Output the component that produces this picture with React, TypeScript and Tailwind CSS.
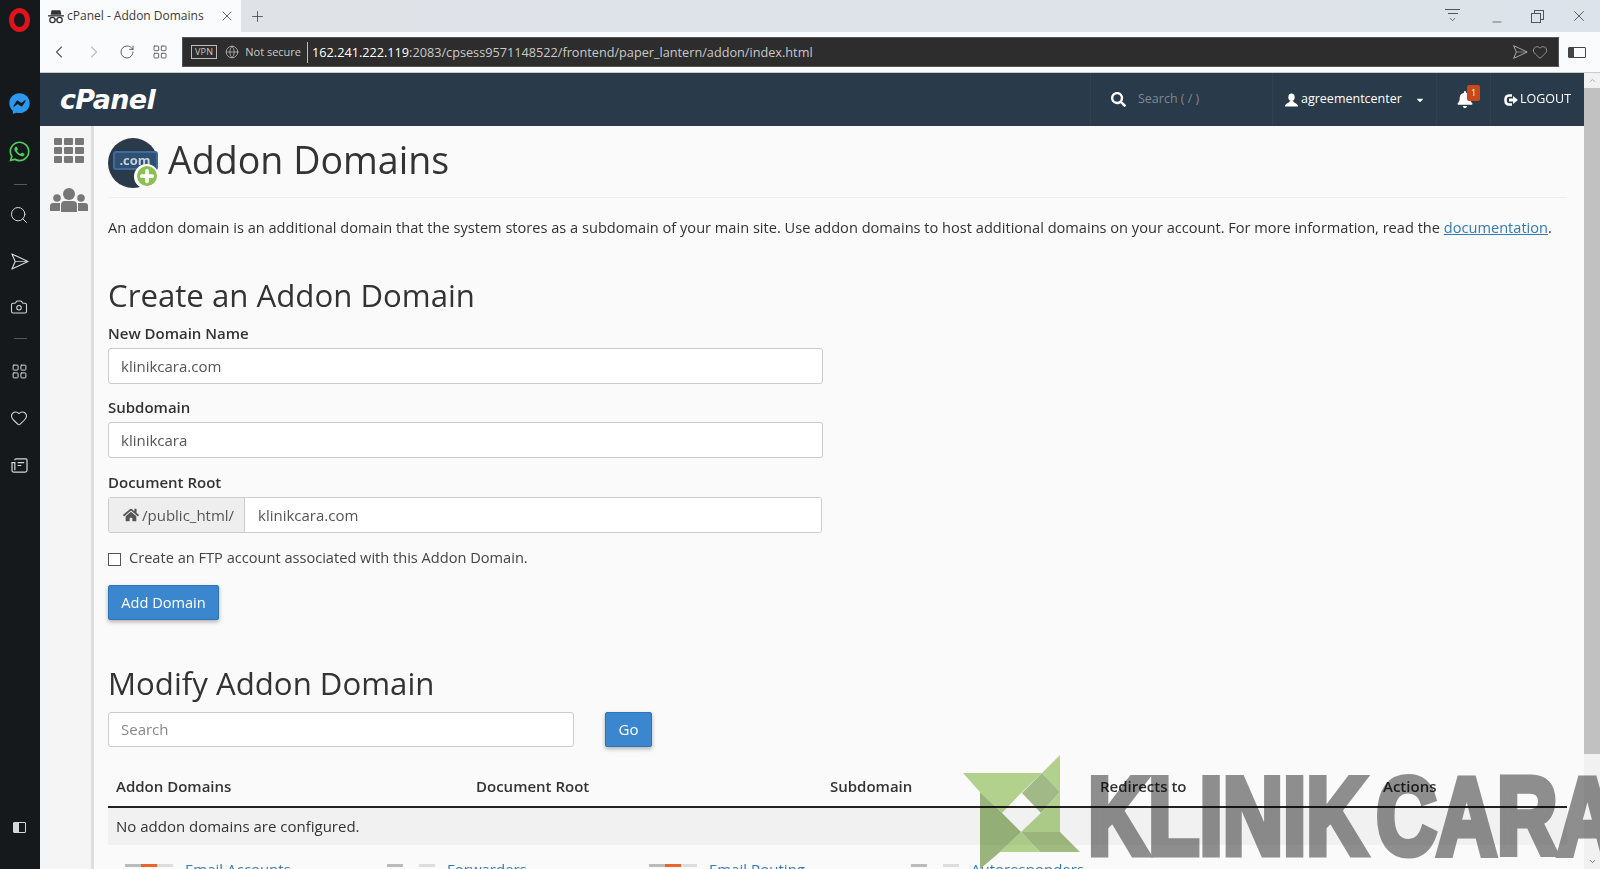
import React from 'react'
import {
  ChevronLeft,
  ChevronRight,
  RotateCw,
  LayoutGrid,
  Globe,
  Search,
  Heart,
  Camera,
  Plus,
  X,
  Minus,
  ChevronUp,
  ChevronDown,
} from 'lucide-react'
import { FaBell, FaHome, FaSearch, FaWhatsapp, FaFacebookMessenger, FaCaretDown } from 'react-icons/fa'

// Avião de papel da Opera (contorno)
const PlaneIcon = ({ className = '' }: { className?: string }) => (
  <svg viewBox="0 0 20 20" fill="none" stroke="currentColor" strokeWidth={1.2} strokeLinejoin="round" className={className}>
    <path d="M2 2 L19 10 L2 18 L5.5 10 Z" />
    <path d="M5.5 10 H19" strokeWidth={0.8} />
  </svg>
)

const NewsIcon = ({ className = '' }: { className?: string }) => (
  <svg viewBox="0 0 18 16" fill="none" stroke="currentColor" strokeWidth={1.3} className={className}>
    <path d="M4 2.5 Q4 1 5.5 1 H16 Q17 1 17 2 V13 Q17 15 15 15 H3 Q1 15 1 13 V5 H4 V13" />
    <path d="M7 5 H14 M7 8 H11" />
  </svg>
)

const IncognitoIcon = ({ className = '' }: { className?: string }) => (
  <svg viewBox="0 0 18 16" className={className}>
    <path d="M4 1 H14 L15 6 H3 Z" fill="#333" />
    <rect x="0" y="6.5" width="18" height="1.5" fill="#333" />
    <circle cx="5" cy="12" r="3" fill="none" stroke="#333" strokeWidth="1.4" />
    <circle cx="13" cy="12" r="3" fill="none" stroke="#333" strokeWidth="1.4" />
    <path d="M8 11.5 H10" stroke="#333" strokeWidth="1.2" />
  </svg>
)

const UsersIcon = ({ className = '' }: { className?: string }) => (
  <svg viewBox="0 0 38 24" fill="#777" className={className}>
    <circle cx="19" cy="6" r="6" />
    <path d="M11 24 V17 Q11 13 15 13 H23 Q27 13 27 17 V24 Z" />
    <circle cx="7" cy="10" r="3.8" />
    <path d="M0 23 V18 Q0 15 3 15 H10 V23 Z" />
    <circle cx="31" cy="10" r="3.8" />
    <path d="M28 23 V15 H35 Q38 15 38 18 V23 Z" />
  </svg>
)

const UserIcon = ({ className = '' }: { className?: string }) => (
  <svg viewBox="0 0 14 14" fill="currentColor" className={className}>
    <ellipse cx="7" cy="4" rx="3.4" ry="4" />
    <path d="M0 14 C0 10.5 4 10.5 5.5 8 H8.5 C10 10.5 14 10.5 14 14 Z" />
  </svg>
)

const LogoutIcon = ({ className = '' }: { className?: string }) => (
  <svg viewBox="0 0 14 12" className={className}>
    <path d="M8 1.5 H5 Q1.5 1.5 1.5 6 Q1.5 10.5 5 10.5 H8" fill="none" stroke="currentColor" strokeWidth="2.6" />
    <path d="M5 4.5 H9 V2 L14 6 L9 10 V7.5 H5 Z" fill="currentColor" />
  </svg>
)

// Barra lateral do navegador
const BrowserSidebar = () => (
  <aside className="w-10 shrink-0 bg-[#16191c] flex flex-col items-center text-[#d4d6d8]">
    <div className="h-[38px] mt-[1px] flex items-center justify-center -translate-x-[1px]">
      <div className="w-[21px] h-[24px] rounded-[50%] border-[5px] border-[#e0131d]" />
    </div>
    <FaFacebookMessenger className="w-[21px] h-[21px] mt-[54px] text-[#2a98ee] -translate-x-[1px]" />
    <FaWhatsapp className="w-[23px] h-[23px] mt-[26px] text-[#4fce5d] -translate-x-[1px]" />
    <div className="w-[13px] h-px bg-[#55585b] mt-[21px]" />
    <Search className="w-[20px] h-[20px] mt-[20px] -translate-x-[1px]" strokeWidth={1.2} />
    <PlaneIcon className="w-[19px] h-[19px] mt-[27px] -translate-x-[1px]" />
    <Camera className="w-[18px] h-[18px] mt-[27px] -translate-x-[1px]" strokeWidth={1.4} />
    <div className="w-[13px] h-px bg-[#55585b] mt-[22px]" />
    <LayoutGrid className="w-[17px] h-[17px] mt-[24px] -translate-x-[1px]" strokeWidth={1.4} />
    <Heart className="w-[18px] h-[18px] mt-[29px] -translate-x-[1px]" strokeWidth={1.4} />
    <NewsIcon className="w-[17px] h-[15px] mt-[31px] -translate-x-[1px]" />
    <div className="mt-auto mb-[36px] w-[13px] h-[11px] border border-[#d4d6d8] rounded-[1px] flex -translate-x-[1px]">
      <div className="w-[5px] bg-[#d4d6d8]" />
    </div>
  </aside>
)

// Abas e barra de endereço
const BrowserChrome = () => (
  <div className="shrink-0">
    <div className="h-8 flex bg-gradient-to-r from-[#dfe3e8] to-[#dde3ea]">
      <div className="w-[201px] bg-[#fafbfc] flex items-center pl-2 pr-[6px] text-[#3a3a3a]">
        <IncognitoIcon className="w-[16px] h-[15px] mr-[3px]" />
        <span className="text-[12px] flex-1 whitespace-nowrap">cPanel - Addon Domains</span>
        <X className="w-[16px] h-[16px]" strokeWidth={1.2} />
      </div>
      <Plus className="w-[17px] h-[17px] ml-[8px] mt-2 text-[#555]" strokeWidth={1.3} />
      <div className="ml-auto flex items-center text-[#444] pr-[12px]">
        <div className="flex flex-col items-center gap-[3px] mr-[30px]">
          <div className="w-[15px] h-px bg-[#555]" />
          <div className="w-[10px] h-px bg-[#555]" />
          <ChevronDown className="w-[9px] h-[9px] -mt-[2px]" />
        </div>
        <Minus className="w-[14px] h-[14px] mt-3 mr-[27px]" strokeWidth={1.2} />
        <div className="relative w-[13px] h-[13px] mr-[26px]">
          <div className="absolute left-[3px] top-0 w-[10px] h-[10px] border border-[#555]" />
          <div className="absolute left-0 top-[3px] w-[10px] h-[10px] border border-[#555] bg-[#dde3ea]" />
        </div>
        <X className="w-[18px] h-[18px]" strokeWidth={1.1} />
      </div>
    </div>
    <div className="h-[41px] bg-[#fafbfc] flex items-center border-b border-[#c8ccd0] text-[#555]">
      <ChevronLeft className="w-[20px] h-[20px] ml-[9px]" strokeWidth={1.3} />
      <ChevronRight className="w-[20px] h-[20px] ml-[15px] text-[#bbb]" strokeWidth={1.3} />
      <RotateCw className="w-[16px] h-[16px] ml-[15px]" strokeWidth={1.4} />
      <LayoutGrid className="w-[16px] h-[16px] ml-[17px]" strokeWidth={1.3} />
      <div className="ml-[14px] w-[1377px] h-[30px] bg-[#2d2d2d] border border-[#555] flex items-center text-[#c9c9c9]">
        <span className="ml-[8px] border border-[#bbb] text-[9px] leading-[10px] px-[3px] py-[1px] tracking-wide">VPN</span>
        <Globe className="w-[14px] h-[14px] ml-[8px]" strokeWidth={1.2} />
        <span className="ml-[6px] text-[11px] whitespace-nowrap">Not secure</span>
        <div className="w-px h-[21px] bg-[#bbb] ml-[6px]" />
        <span className="ml-[4px] mt-[2px] text-[12.7px] text-white whitespace-nowrap">
          162.241.222.119<span className="text-[#c9c9c9]">:2083/cpsess9571148522/frontend/paper_lantern/addon/index.html</span>
        </span>
        <div className="ml-auto flex items-center gap-[4px] mr-[10px] text-[#aaa]">
          <PlaneIcon className="w-[16px] h-[16px]" />
          <Heart className="w-[16px] h-[16px]" strokeWidth={1.2} />
        </div>
      </div>
      <div className="ml-[9px] w-[18px] h-[11px] border border-[#444] rounded-[1px] flex">
        <div className="w-[5px] bg-[#444]" />
      </div>
    </div>
  </div>
)

const CpanelHeader = () => (
  <header className="h-[53px] shrink-0 bg-[#293a4a] flex items-center text-white">
    <span
      className="ml-5 text-[27px] font-bold italic tracking-tight leading-none"
      style={{ fontFamily: '"DejaVu Sans", sans-serif' }}
    >
      cPanel
    </span>
    <div className="ml-auto flex h-full items-stretch">
      <div className="w-[182px] border-l border-[#30414f] flex items-center pl-[20px]">
        <FaSearch className="w-[15px] h-[15px]" />
        <span className="ml-[12px] text-[12.5px] text-[#7c8994]">Search ( / )</span>
      </div>
      <div className="w-[164px] border-l border-[#30414f] flex items-center pl-[12px]">
        <UserIcon className="w-[13px] h-[14px]" />
        <span className="ml-[3px] text-[12.5px]">agreementcenter</span>
        <FaCaretDown className="w-[10px] h-[10px] ml-[13px]" />
      </div>
      <div className="relative w-[54px] border-l border-[#30414f] flex items-center pl-[20px]">
        <FaBell className="w-[16px] h-[17px]" />
        <span className="absolute left-[30px] top-[12px] bg-[#c9481b] text-[9px] leading-[15px] w-[13px] h-[16px] text-center rounded-[2px]">1</span>
      </div>
      <div className="w-[94px] border-l border-[#30414f] flex items-center pl-[13px] text-[12.5px]">
        <LogoutIcon className="w-[14px] h-[12px] mr-[2px]" />
        LOGOUT
      </div>
    </div>
  </header>
)

const Field = ({ label, value, className = '' }: { label: string; value: string; className?: string }) => (
  <div className={className}>
    <label className="block text-[15px] font-semibold text-[#333] leading-[20px] mb-[5px]">{label}</label>
    <div className="w-[715px] h-[36px] bg-white border border-[#ccc] rounded-[3px] px-3 flex items-center text-[15px] text-[#555]">
      {value}
    </div>
  </div>
)

// Ícones e links cortados no rodapé da página
const FooterStub = ({ label, accent }: { label: string; accent?: boolean }) => (
  <div className="w-[262px] flex items-start">
    <div className="w-[16px] h-[3px] mt-[5px] ml-[17px] bg-[#bbb]" />
    <div className={`w-[16px] h-[3px] mt-[5px] ${accent ? 'bg-[#e8662a]' : 'bg-transparent'}`} />
    <div className="w-[16px] h-[3px] mt-[5px] bg-[#ddd]" />
    <span className="ml-[12px] text-[15px] leading-[20px] text-[#337ab7] whitespace-nowrap">{label}</span>
  </div>
)

const Watermark = () => (
  <div className="absolute left-[950px] top-[750px] w-[650px] h-[119px] overflow-hidden mix-blend-multiply pointer-events-none">
    <svg viewBox="0 0 135 119" className="absolute left-0 top-0 w-[135px] h-[119px]">
      <polygon points="13,23 92,23 71,43 52,63 30,42" fill="#b5d68f" />
      <polygon points="110,5 92,23 110,42" fill="#b5d68f" />
      <polygon points="92,23 110,42 91,63 72,43" fill="#a3bd8a" />
      <polygon points="110,42 110,82 71,82 91,63" fill="#b5d68f" />
      <polygon points="71,82 110,82 130,102 90,102" fill="#a3bf83" />
      <polygon points="71,82 90,102 50,102" fill="#b5d68f" />
      <polygon points="30,42 52,63 71,82 50,102 30,119" fill="#9db87f" />
    </svg>
    <span className="absolute left-[138px] top-[11px] text-[#919191] text-[110px] font-bold leading-[1] whitespace-nowrap origin-left scale-x-[0.76] [-webkit-text-stroke:7px_#919191] [word-spacing:-18px]"
      style={{ fontFamily: '"Liberation Sans", sans-serif' }}
    >
      KLINIK CARA
    </span>
  </div>
)

export default function App() {
  return (
    <div className="relative w-[1600px] h-[869px] flex overflow-hidden" style={{ fontFamily: '"Open Sans", sans-serif' }}>
      <BrowserSidebar />
      <div className="flex-1 min-w-0 flex flex-col">
        <BrowserChrome />
        <div className="flex-1 min-h-0 flex">
          <div className="flex-1 min-w-0 flex flex-col">
            <CpanelHeader />
            <div className="flex-1 min-h-0 flex">
              <nav className="w-[54px] shrink-0 bg-[#f5f5f5] border-r-[3px] border-[#dedede] flex flex-col items-center text-[#777]">
                <div className="mt-[12px] ml-[6px] w-[30px] grid grid-cols-3 gap-[2px]">
                  {[...Array(9)].map((_, i) => (
                    <div key={i} className="h-[7px] rounded-[1px] bg-[#777]" />
                  ))}
                </div>
                <UsersIcon className="w-[38px] h-[24px] mt-[25px] ml-[6px]" />
              </nav>
              <main className="flex-1 min-w-0 bg-[#fafafa] pl-[14px] pr-[17px] overflow-hidden text-[#333]">
                <div className="flex items-center h-[72px] border-b border-[#eee]">
                  <div className="relative w-[50px] h-[50px] mt-[2px] rounded-full bg-[#2a3a4a] flex items-center justify-center">
                    <span className="ml-[4px] border-2 border-[#3f6c9c] bg-[#2f5070] rounded-[3px] text-[#c5d1dc] text-[13px] font-bold leading-[15px] w-[45px] text-center mb-[4px]">.com</span>
                    <span className="absolute -right-[1px] -bottom-[1px] w-[25px] h-[25px] rounded-full bg-white flex items-center justify-center">
                      <span className="w-[20px] h-[20px] rounded-full bg-[#8cc152] flex items-center justify-center">
                        <Plus className="w-[18px] h-[18px] text-white" strokeWidth={5} />
                      </span>
                    </span>
                  </div>
                  <h1 className="ml-[10px] text-[37.6px] leading-[44px] text-[#333] mb-[3px]">Addon Domains</h1>
                </div>
                <p className="mt-[19px] text-[14.6px] leading-[21px] whitespace-nowrap">
                  An addon domain is an additional domain that the system stores as a subdomain of your main site. Use addon domains to host additional domains on your account. For more information, read the{' '}
                  <span className="text-[#337ab7] underline">documentation</span>.
                </p>
                <h2 className="mt-[37px] text-[31.2px] leading-[40px]">Create an Addon Domain</h2>
                <Field className="mt-[8px]" label="New Domain Name" value="klinikcara.com" />
                <Field className="mt-[13px]" label="Subdomain" value="klinikcara" />
                <div className="mt-[14px]">
                  <label className="block text-[15px] font-semibold leading-[20px] mb-[5px]">Document Root</label>
                  <div className="w-[714px] h-[36px] flex border border-[#ccc] rounded-[3px] text-[15px] text-[#555] overflow-hidden">
                    <div className="w-[136px] bg-[#eee] border-r border-[#ccc] flex items-center pl-[14px]">
                      <FaHome className="w-[16px] h-[16px] mr-[3px]" />
                      /public_html/
                    </div>
                    <div className="flex-1 bg-white flex items-center pl-[13px]">klinikcara.com</div>
                  </div>
                </div>
                <div className="mt-[14px] flex items-center h-[21px] text-[14.6px] text-[#444]">
                  <span className="w-[13px] h-[13px] border-[1.5px] border-[#555] bg-white mt-[3px]" />
                  <span className="ml-[8px]">Create an FTP account associated with this Addon Domain.</span>
                </div>
                <button className="mt-[17px] block w-[111px] h-[35px] bg-[#3a87d0] border border-[#2f75b5] rounded-[2px] text-white text-[14.6px] shadow-[0_2px_4px_rgba(0,0,0,0.3)]">Add Domain</button>
                <h2 className="mt-[43px] text-[31.2px] leading-[40px]">Modify Addon Domain</h2>
                <div className="mt-[9px] flex items-center">
                  <div className="w-[466px] h-[35px] bg-white border border-[#ccc] rounded-[3px] px-3 flex items-center text-[15px] text-[#888]">Search</div>
                  <button className="ml-[31px] w-[47px] h-[35px] bg-[#3a87d0] border border-[#2f75b5] rounded-[2px] text-white text-[15px] shadow-[0_2px_4px_rgba(0,0,0,0.3)]">Go</button>
                </div>
                <div className="mt-[20px] flex h-[41px] items-center border-b-2 border-[#222] font-semibold text-[15px] pl-[8px]">
                  <div className="w-[360px]">Addon Domains</div>
                  <div className="w-[354px]">Document Root</div>
                  <div className="w-[270px]">Subdomain</div>
                  <div className="w-[283px]">Redirects to</div>
                  <div>Actions</div>
                </div>
                <div className="h-[37px] bg-[#f1f1f1] flex items-center pl-[8px] text-[15px]">No addon domains are configured.</div>
                <div className="mt-[14px] flex">
                  <FooterStub label="Email Accounts" accent />
                  <FooterStub label="Forwarders" />
                  <FooterStub label="Email Routing" accent />
                  <FooterStub label="Autoresponders" />
                </div>
              </main>
            </div>
          </div>
          <div className="w-[16px] shrink-0 bg-[#f1f1f1] flex flex-col">
            <div className="h-[15px] flex items-center justify-center">
              <ChevronUp className="w-[9px] h-[9px] text-[#999]" />
            </div>
            <div className="h-[666px] bg-[#c1c1c1]" />
            <div className="mt-auto h-[15px] flex items-center justify-center">
              <ChevronDown className="w-[9px] h-[9px] text-[#555]" />
            </div>
          </div>
        </div>
      </div>
      <Watermark />
    </div>
  )
}
